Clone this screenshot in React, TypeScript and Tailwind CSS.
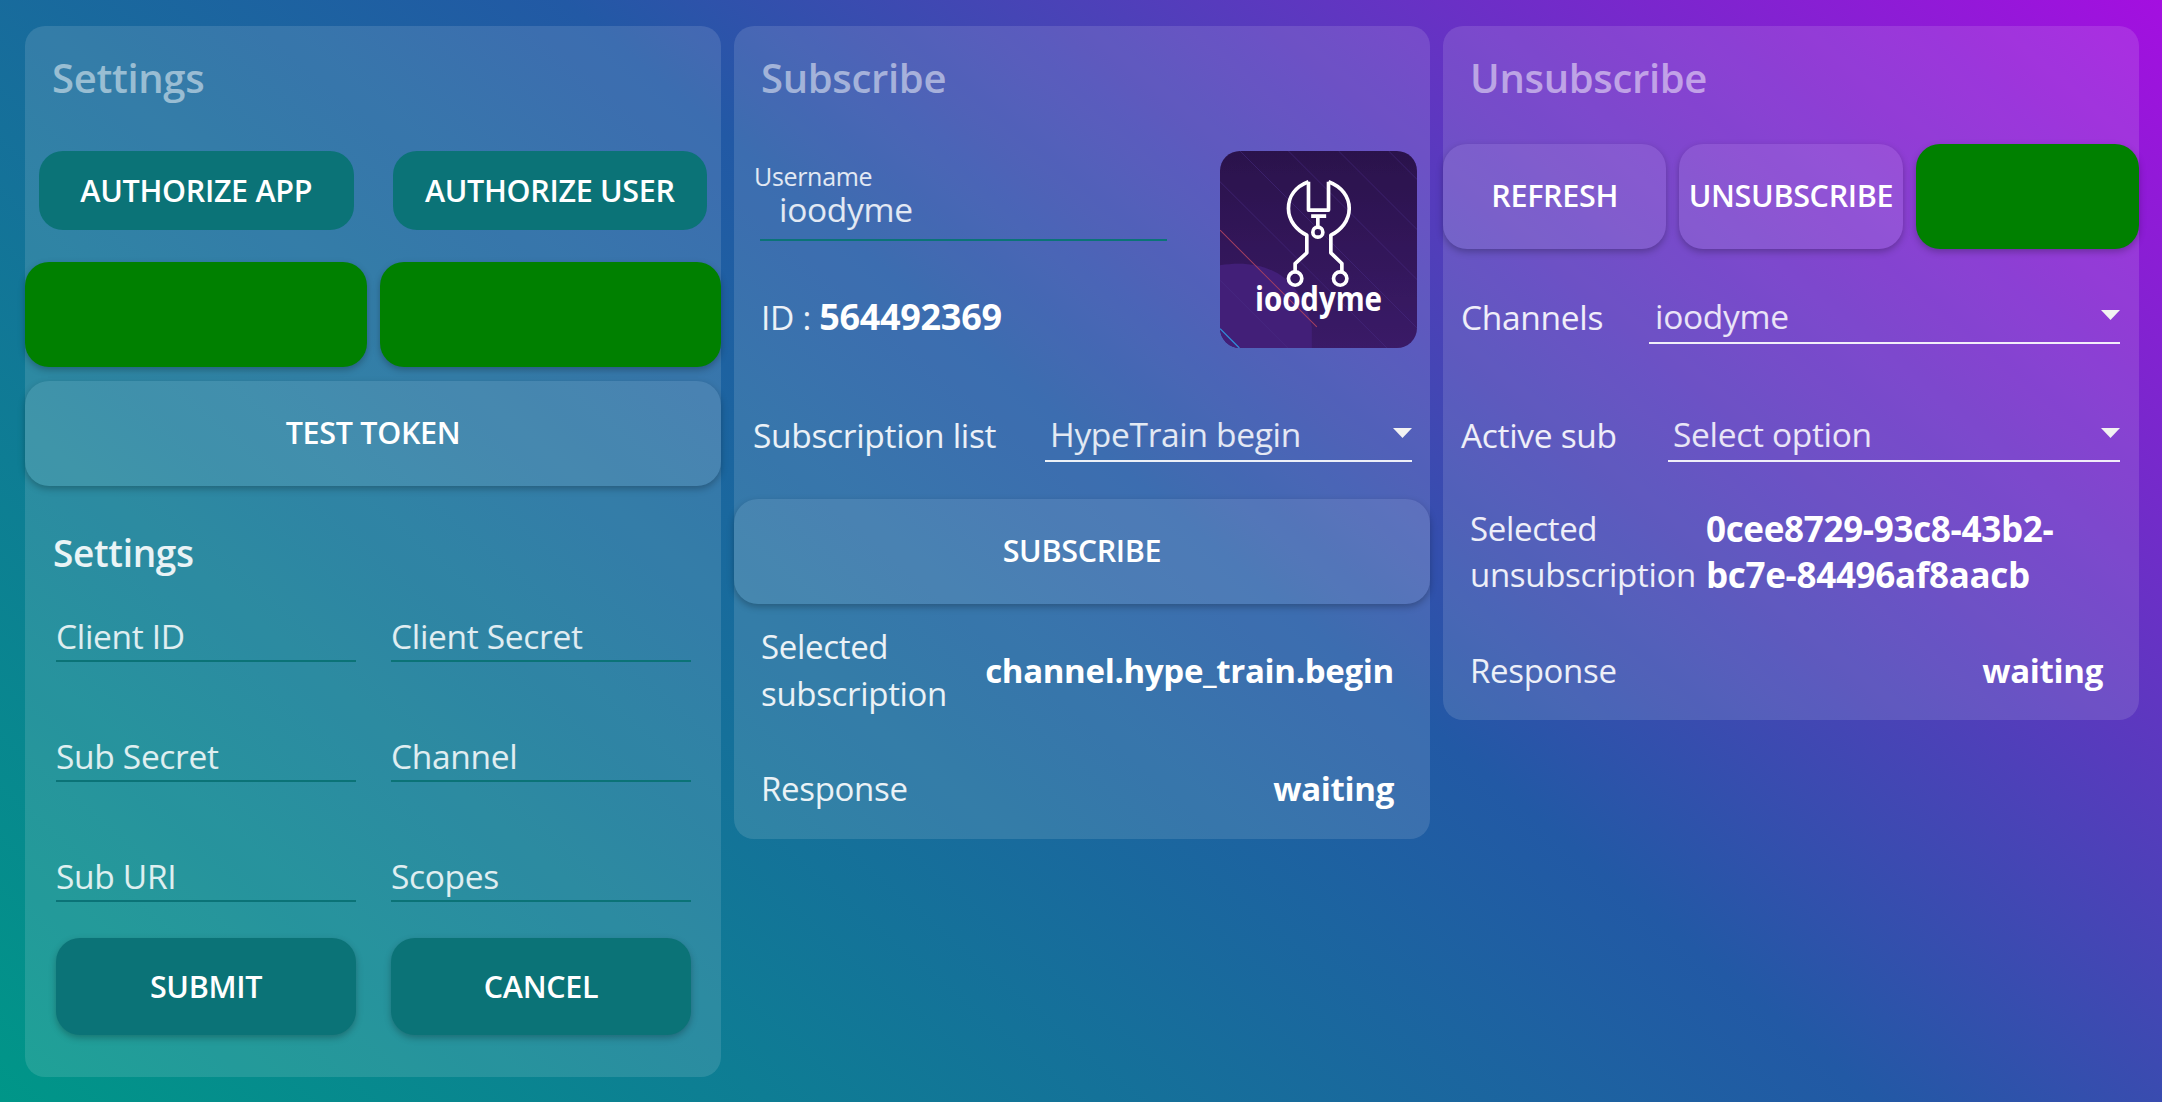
const panel = "w-[696px] rounded-[20px] bg-white/[0.12] text-white/90";
const raised = "flex items-center justify-center rounded-[24px] bg-white/[0.09] pb-[2px] text-[30.5px] font-semibold text-white shadow-[0_3px_7px_rgba(0,0,0,0.25)]";
const green = "rounded-[24px] bg-[#008000] shadow-[0_3px_7px_rgba(0,0,0,0.25)]";
const teal = "flex items-center justify-center bg-[#0b7377] text-[30.5px] font-semibold text-white";

function Title({ children, className }: { children: string; className: string }) {
  return <div className={`pl-[27px] pt-[28px] text-[40px] leading-[48px] font-semibold text-white/50 ${className}`}>{children}</div>;
}

function Field({ label }: { label: string }) {
  return <div className="h-[60px] border-b-2 border-[#0b7377] pt-[14px] text-[33.5px] leading-[40px] text-white/85">{label}</div>;
}

function Arrow() {
  return (
    <svg width="19" height="10" viewBox="0 0 19 10" className="mt-[13px]">
      <polygon points="0,0 19,0 9.5,10" fill="#f2f2f2" />
    </svg>
  );
}

function Select({ value, className }: { value: string; className: string }) {
  return (
    <div className={`flex h-[47px] items-start justify-between border-b-2 border-white/90 text-[33.5px] leading-[38px] text-white/85 ${className}`}>
      <span>{value}</span>
      <Arrow />
    </div>
  );
}

function Logo() {
  return (
    <svg viewBox="60 63 590 590" className="h-[197px] w-[197px] shrink-0 rounded-[20px]">
      <defs>
        <linearGradient id="logoBg" x1="0" y1="0" x2="0" y2="1">
          <stop offset="0" stopColor="#2b134c" />
          <stop offset="1" stopColor="#3b1b68" />
        </linearGradient>
      </defs>
      <rect x="60" y="63" width="590" height="590" fill="url(#logoBg)" />
      <path d="M60 405 C190 385 300 430 335 590 L335 653 L60 653 Z" fill="#432079" />
      <g stroke="#4a2d86" strokeWidth="2" fill="none" opacity="0.8">
        <path d="M120 63 L650 593" />
        <path d="M265 63 L650 448" />
        <path d="M415 63 L650 298" />
        <path d="M565 63 L650 148" />
        <path d="M60 155 L560 653" />
        <path d="M60 450 L263 653" />
      </g>
      <path d="M60 300 L350 590" stroke="#a8405f" strokeWidth="3" />
      <path d="M60 595 L118 653" stroke="#2f8fd8" strokeWidth="4" />
      <g stroke="#ffffff" strokeWidth="11" fill="none" strokeLinejoin="round">
        <path d="M325 155 C285 170 265 200 265 235 C265 272 290 300 320 315 L320 368 L285 400 L285 425" />
        <path d="M385 155 C425 170 447 200 447 235 C447 272 422 300 392 315 L392 368 L425 400 L425 425" />
        <path d="M325 155 L325 240 L385 240 L385 155" />
        <path d="M333 258 L378 258 M353 258 L353 290" />
        <circle cx="353" cy="306" r="15" />
        <circle cx="285" cy="445" r="20" />
        <circle cx="420" cy="445" r="20" />
      </g>
      <text x="355" y="543" textAnchor="middle" textLength="380" lengthAdjust="spacingAndGlyphs" fill="#ffffff" fontSize="100" fontWeight="700">
        ioodyme
      </text>
    </svg>
  );
}

function SettingsPanel() {
  return (
    <section className={panel}>
      <Title className="h-[125px]">Settings</Title>
      <div className="flex gap-[39px] px-[14px]">
        <div className={`${teal} h-[79px] w-[315px] rounded-[24px]`}>AUTHORIZE APP</div>
        <div className={`${teal} h-[79px] w-[315px] rounded-[24px]`}>AUTHORIZE USER</div>
      </div>
      <div className="mt-[32px] grid grid-cols-2 gap-[13px]">
        <div className={`${green} h-[105px]`} />
        <div className={`${green} h-[105px]`} />
      </div>
      <div className={`${raised} mt-[14px] h-[105px]`}>TEST TOKEN</div>
      <div className="mt-[45px] pl-[28px] text-[37px] leading-[44px] font-semibold">Settings</div>
      <div className="mt-[27px] grid grid-cols-[300px_300px] gap-x-[35px] gap-y-[60px] px-[31px]">
        <Field label="Client ID" />
        <Field label="Client Secret" />
        <Field label="Sub Secret" />
        <Field label="Channel" />
        <Field label="Sub URI" />
        <Field label="Scopes" />
      </div>
      <div className="mt-[36px] grid grid-cols-[300px_300px] gap-x-[35px] px-[31px] pb-[42px]">
        <div className={`${teal} h-[97px] rounded-[24px] shadow-[0_3px_7px_rgba(0,0,0,0.25)]`}>SUBMIT</div>
        <div className={`${teal} h-[97px] rounded-[24px] shadow-[0_3px_7px_rgba(0,0,0,0.25)]`}>CANCEL</div>
      </div>
    </section>
  );
}

function SubscribePanel() {
  return (
    <section className={panel}>
      <Title className="h-[125px]">Subscribe</Title>
      <div className="flex items-start">
        <div className="w-[433px]">
          <div className="mt-[12px] ml-[20px] h-[26px] text-[25px] leading-[26px] text-white/85">Username</div>
          <div className="ml-[26px] border-b-2 border-[#0b7377] pb-[10px] pl-[19px] text-[33.5px] leading-[40px] text-white/85">ioodyme</div>
          <div className="mt-[56px] ml-[27px] text-[33.5px] leading-[40px]">
            ID : <span className="text-[36px] font-bold text-white">564492369</span>
          </div>
        </div>
        <div className="ml-[53px]">
          <Logo />
        </div>
      </div>
      <div className="mt-[67px] flex items-start justify-between pr-[18px] pl-[19px]">
        <div className="text-[33.5px] leading-[40px]">Subscription list</div>
        <Select value="HypeTrain begin" className="w-[367px] pl-[5px]" />
      </div>
      <div className={`${raised} mt-[37px] h-[105px]`}>SUBSCRIBE</div>
      <div className="mt-[19px] flex items-center justify-between pr-[36px] pl-[27px] text-[33px] leading-[47px]">
        <div className="w-[190px]">Selected subscription</div>
        <div className="font-bold text-white">channel.hype_train.begin</div>
      </div>
      <div className="mt-[48px] flex items-center justify-between pr-[36px] pb-[27px] pl-[27px] text-[33px] leading-[47px]">
        <div>Response</div>
        <div className="font-bold text-white">waiting</div>
      </div>
    </section>
  );
}

function UnsubscribePanel() {
  return (
    <section className={panel}>
      <Title className="h-[118px]">Unsubscribe</Title>
      <div className="grid grid-cols-3 gap-[13px]">
        <div className={`${raised} h-[105px]`}>REFRESH</div>
        <div className={`${raised} h-[105px]`}>UNSUBSCRIBE</div>
        <div className={`${green} h-[105px]`} />
      </div>
      <div className="mt-[48px] flex items-start justify-between pr-[19px] pl-[18px]">
        <div className="text-[33.5px] leading-[40px]">Channels</div>
        <Select value="ioodyme" className="w-[471px] pl-[6px]" />
      </div>
      <div className="mt-[71px] flex items-start justify-between pr-[19px] pl-[18px]">
        <div className="text-[33.5px] leading-[40px]">Active sub</div>
        <Select value="Select option" className="w-[452px] pl-[5px]" />
      </div>
      <div className="mt-[44px] flex items-center pr-[36px] pl-[27px] text-[33px] leading-[46px]">
        <div className="w-[236px] shrink-0">Selected unsubscription</div>
        <div className="text-[35px] font-bold text-white">0cee8729-93c8-43b2-bc7e-84496af8aacb</div>
      </div>
      <div className="mt-[49px] flex items-center justify-between pr-[36px] pb-[26px] pl-[27px] text-[33px] leading-[47px]">
        <div>Response</div>
        <div className="font-bold text-white">waiting</div>
      </div>
    </section>
  );
}

export default function App() {
  return (
    <div className="flex h-[1102px] w-[2162px] items-start gap-[13px] overflow-hidden bg-[linear-gradient(40deg,#009688,#2259a5_54%,#a40fe0)] pt-[26px] pl-[25px] font-['Open_Sans','Liberation_Sans',sans-serif] tracking-[-0.02em]">
      <SettingsPanel />
      <SubscribePanel />
      <UnsubscribePanel />
    </div>
  );
}
